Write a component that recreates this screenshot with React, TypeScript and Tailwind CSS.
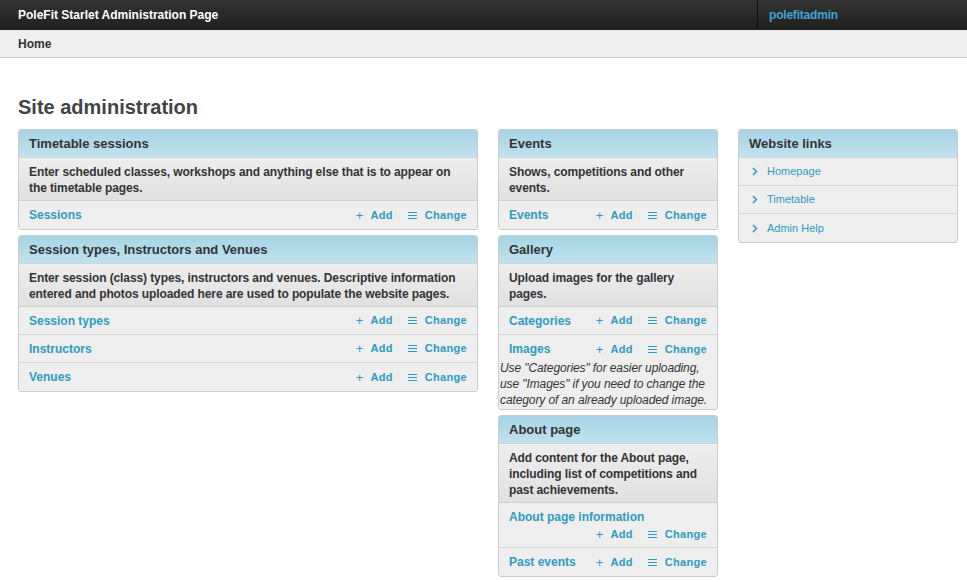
import React from "react";

const F = { fontFamily: '"Liberation Sans", Arial, Helvetica, sans-serif' };

function Actions() {
  return (
    <div className="flex items-center shrink-0 text-[11px] font-bold text-[#309bbf] tracking-[0.3px]">
      <span className="flex items-center">
        <span className="text-[13px] font-normal mr-[7px] leading-none">+</span>
        <span>Add</span>
      </span>
      <span className="flex items-center ml-[15px]">
        <svg width="9" height="9" viewBox="0 0 9 9" className="mr-[8px]">
          <path d="M0 1.5H9M0 4.5H9M0 7.5H9" stroke="#309bbf" strokeWidth="1" />
        </svg>
        <span>Change</span>
      </span>
    </div>
  );
}

function Row({ name, wrap, last }: { name: string; wrap?: boolean; last?: boolean }) {
  if (wrap) {
    return (
      <div className={`bg-[#eee] px-[10px] pt-[6px] pb-[5px] ${last ? "" : "border-b border-[#d9d9d9]"}`}>
        <div className="text-[12px] font-bold text-[#309bbf] leading-[16px]">{name}</div>
        <div className="flex justify-end leading-[16px] mt-[1px]">
          <Actions />
        </div>
      </div>
    );
  }
  return (
    <div className={`bg-[#eee] h-[28px] flex items-center justify-between px-[10px] ${last ? "" : "border-b border-[#d9d9d9]"}`}>
      <span className="text-[12px] font-bold text-[#309bbf]">{name}</span>
      <Actions />
    </div>
  );
}

function Module({
  title,
  desc,
  rows,
  note,
}: {
  title: string;
  desc: string;
  rows: { name: string; wrap?: boolean }[];
  note?: string;
}) {
  return (
    <div className="border border-[#ccc] rounded-[3px] overflow-hidden mb-[5px] bg-[#eee]">
      <div className="h-[28px] flex items-center px-[10px] bg-gradient-to-b from-[#a6d4e6] to-[#c0e2ed] border-b border-[#c6d9e0] text-[13px] font-bold text-[#333]">
        {title}
      </div>
      <div className="px-[10px] pt-[6px] pb-[4px] bg-gradient-to-b from-[#eeeeee] to-[#e0e0e0] border-b border-[#cfcfcf] text-[12px] font-bold text-[#333] leading-[16px] tracking-[-0.1px]">
        {desc}
      </div>
      {rows.map((r, i) => (
        <Row key={r.name} name={r.name} wrap={r.wrap} last={i === rows.length - 1} />
      ))}
      {note && (
        <div className="bg-[#eee] italic text-[12px] text-[#333] leading-[16px] pb-[1px] -mt-[3px] pl-[1px] tracking-[-0.1px]">
          {note}
        </div>
      )}
    </div>
  );
}

export default function App() {
  return (
    <div style={F} className="h-[582px] overflow-hidden bg-white">
      <div className="h-[30px] bg-gradient-to-b from-[#333333] to-[#1f1f1f] flex">
        <div className="flex-1 flex items-center pl-[18px] text-white text-[12px] font-bold">
          PoleFit Starlet Administration Page
        </div>
        <div className="w-[210px] border-l border-[#0f0f0f] flex items-center pl-[11px] text-[12px] font-bold text-[#3fa7d8] tracking-[-0.2px]">
          polefitadmin
        </div>
      </div>
      <div className="h-[28px] bg-[#eee] border-b border-[#c9c9c9] flex items-center pl-[18px] text-[12px] font-bold text-[#333]">
        Home
      </div>
      <div className="pl-[18px]">
        <h1 className="text-[20px] font-bold text-[#444] mt-[37px] mb-[10px] leading-[24px]">Site administration</h1>
        <div className="flex gap-[20px] items-start">
          <div className="w-[460px] shrink-0">
            <Module
              title="Timetable sessions"
              desc="Enter scheduled classes, workshops and anything else that is to appear on the timetable pages."
              rows={[{ name: "Sessions" }]}
            />
            <Module
              title="Session types, Instructors and Venues"
              desc="Enter session (class) types, instructors and venues. Descriptive information entered and photos uploaded here are used to populate the website pages."
              rows={[{ name: "Session types" }, { name: "Instructors" }, { name: "Venues" }]}
            />
          </div>
          <div className="w-[220px] shrink-0">
            <Module
              title="Events"
              desc="Shows, competitions and other events."
              rows={[{ name: "Events" }]}
            />
            <Module
              title="Gallery"
              desc="Upload images for the gallery pages."
              rows={[{ name: "Categories" }, { name: "Images" }]}
              note={'Use "Categories" for easier uploading, use "Images" if you need to change the category of an already uploaded image.'}
            />
            <Module
              title="About page"
              desc="Add content for the About page, including list of competitions and past achievements."
              rows={[{ name: "About page information", wrap: true }, { name: "Past events" }]}
            />
            <Module title="Contact page" desc="Contact details." rows={[{ name: "Contact" }]} />
          </div>
          <div className="w-[220px] shrink-0">
            <div className="border border-[#ccc] rounded-[3px] overflow-hidden bg-[#eee]">
              <div className="h-[28px] flex items-center px-[10px] bg-gradient-to-b from-[#a6d4e6] to-[#c0e2ed] border-b border-[#c6d9e0] text-[13px] font-bold text-[#333]">
                Website links
              </div>
              {["Homepage", "Timetable", "Admin Help"].map((l, i) => (
                <div
                  key={l}
                  className={`h-[28px] flex items-center pl-[13px] text-[11px] text-[#309bbf] ${i < 2 ? "border-b border-[#d9d9d9]" : ""}`}
                >
                  <svg width="6" height="9" viewBox="0 0 6 9" className="mr-[9px]">
                    <path d="M1 1L4.5 4.5L1 8" stroke="#309bbf" strokeWidth="1.5" fill="none" />
                  </svg>
                  {l}
                </div>
              ))}
            </div>
          </div>
        </div>
      </div>
    </div>
  );
}
